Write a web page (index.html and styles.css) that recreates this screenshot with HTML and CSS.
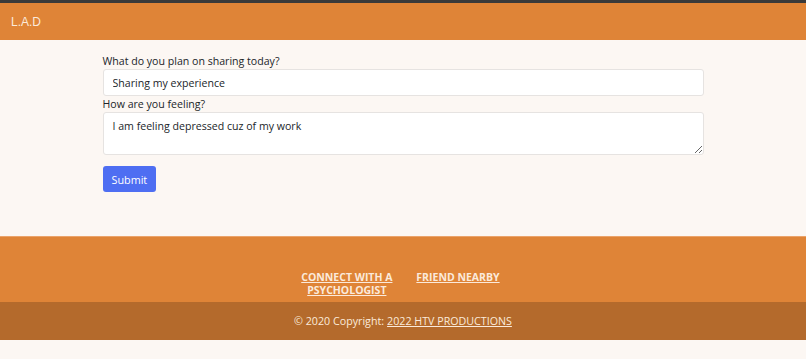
FILE: index.html
```html
<!DOCTYPE html>
<html lang="en">
<head>
    <meta charset="UTF-8">
    <meta name="viewport" content="width=device-width, initial-scale=1.0">
    <title>L.A.D</title>
    <link rel="stylesheet" href="styles.css">
</head>
<body>
    <nav class="topbar">
        <span class="brand">L.A.D</span>
    </nav>
    <main class="content">
        <form class="share-form">
            <label for="topic">What do you plan on sharing today?</label>
            <input id="topic" class="field" type="text" value="Sharing my experience">
            <label for="feeling">How are you feeling?</label>
            <textarea id="feeling" class="field area">I am feeling depressed cuz of my work</textarea>
            <button type="submit" class="btn">Submit</button>
        </form>
    </main>
    <footer class="footer">
        <div class="links">
            <a href="#" class="link wrap">CONNECT WITH A PSYCHOLOGIST</a>
            <a href="#" class="link">FRIEND NEARBY</a>
        </div>
        <div class="copyright">
            &copy; 2020 Copyright: <a href="#">2022 HTV PRODUCTIONS</a>
        </div>
    </footer>
</body>
</html>
```

FILE: styles.css
```css
body {
    margin: 0;
    font-family: 'Open Sans', sans-serif;
    background: #fcf7f3;
    color: #212529;
}
.topbar {
    border-top: 3px solid #3a3a3a;
    background: #df8437;
    height: 37px;
    display: flex;
    align-items: center;
    padding-left: 11px;
}
.brand {
    font-family: 'Liberation Sans', Arial, sans-serif;
    font-size: 12px;
    color: #fbeadb;
}
.content {
    height: 196px;
}
.share-form {
    width: 601px;
    margin: 0 auto;
    padding-top: 14px;
    display: flex;
    flex-direction: column;
    align-items: flex-start;
    font-size: 10.6px;
}
.share-form label {
    line-height: 15px;
}
.field {
    box-sizing: border-box;
    width: 100%;
    height: 27px;
    margin: 0 0 1px;
    padding: 0 9px;
    border: 1px solid #e6e3e1;
    border-radius: 3px;
    background: #fff;
    font-family: inherit;
    font-size: 10.6px;
    color: #212529;
}
.area {
    height: 43px;
    padding-top: 6px;
    resize: vertical;
}
.btn {
    margin-top: 10px;
    padding: 0 9px;
    height: 26px;
    border: none;
    border-radius: 3px;
    background: #4e6ef2;
    color: #fff;
    font-family: inherit;
    font-size: 10.8px;
}
.footer {
    color: #fbeadb;
}
.links {
    background: #df8437;
    border-top: 1px solid #eba36a;
    height: 66px;
    box-sizing: border-box;
    padding: 34px 7px 0 0;
    display: flex;
    justify-content: center;
    gap: 22px;
}
.link {
    color: #fbeadb;
    font-weight: bold;
    font-size: 10.5px;
    line-height: 13px;
    text-align: center;
}
.wrap {
    width: 95px;
}
.copyright {
    background: #b46a2c;
    height: 38px;
    display: flex;
    align-items: center;
    justify-content: center;
    font-size: 10.7px;
}
.copyright a {
    color: #fbeadb;
    margin-left: 3px;
}
```
